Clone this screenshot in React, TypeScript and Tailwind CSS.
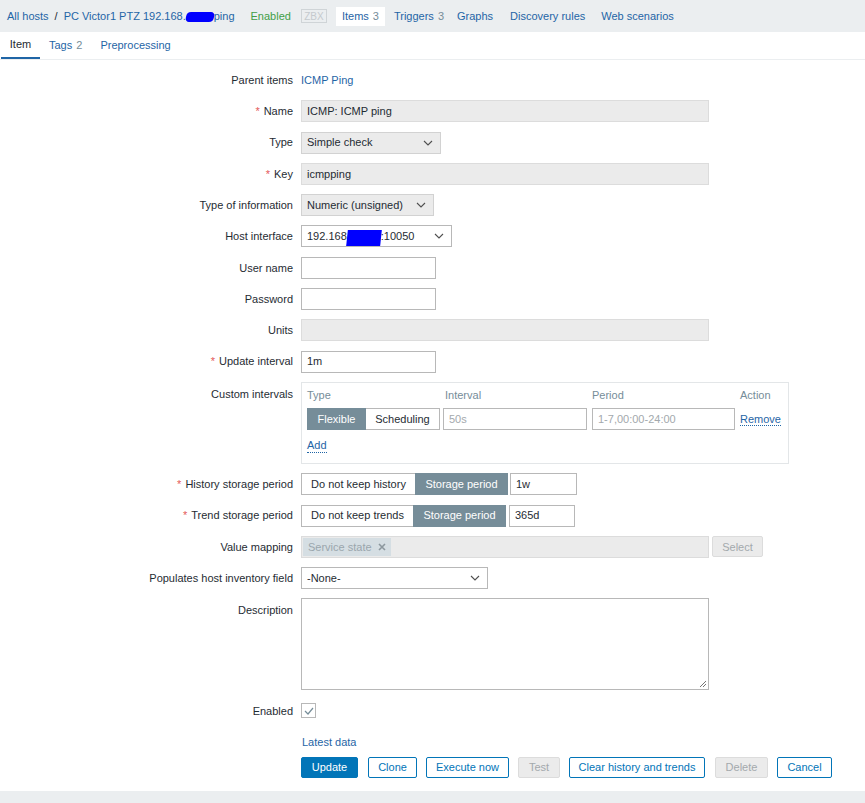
import React from 'react';

const LINK = 'text-[#1f65a6]';

function Chevron() {
  return (
    <svg width="10" height="6" viewBox="0 0 10 6" className="shrink-0">
      <path d="M1 1l4 4 4-4" fill="none" stroke="#4f4f4f" strokeWidth="1.1" />
    </svg>
  );
}

function Label({ text, required, top }: { text: string; required?: boolean; top?: boolean }) {
  return (
    <div className={`flex justify-end text-[#1f2c33] ${top ? 'items-start pt-[4px]' : 'items-center h-[22px]'}`}>
      {required && <span className="text-[#e45959] mr-[4px]">*</span>}
      {text}
    </div>
  );
}

function TextBox({ w, value, disabled, muted }: { w: string; value?: string; disabled?: boolean; muted?: boolean }) {
  return (
    <div
      className={`${w} h-[22px] flex items-center px-[5px] border ${
        disabled ? 'bg-[#ebebeb] border-[#dcdcdc]' : 'bg-white border-[#b8b8b8]'
      } ${muted ? 'text-[#a3a9ad]' : 'text-[#1f2c33]'}`}
    >
      {value}
    </div>
  );
}

function SelectBox({ w, children, gray }: { w: string; children: React.ReactNode; gray?: boolean }) {
  return (
    <div
      className={`${w} h-[22px] flex items-center justify-between pl-[5px] pr-[7px] border text-[#1f2c33] ${
        gray ? 'bg-[#ebebeb] border-[#d2d2d2]' : 'bg-white border-[#b8b8b8]'
      }`}
    >
      <span className="flex items-center">{children}</span>
      <Chevron />
    </div>
  );
}

function Toggle({ left, right, lw, rw }: { left: string; right: string; lw: string; rw: string }) {
  return (
    <div className="flex h-[22px]">
      <div className={`${lw} flex items-center justify-center border border-r-0 border-[#b8b8b8] bg-white text-[#1f2c33]`}>{left}</div>
      <div className={`${rw} flex items-center justify-center bg-[#768d99] text-white`}>{right}</div>
    </div>
  );
}

function Btn({ children, w, kind }: { children: React.ReactNode; w: string; kind: 'primary' | 'outline' | 'disabled' }) {
  const cls =
    kind === 'primary'
      ? 'bg-[#0275b8] border-[#0275b8] text-white'
      : kind === 'outline'
      ? 'bg-white border-[#0275b8] text-[#0275b8]'
      : 'bg-[#ebebeb] border-[#dcdcdc] text-[#a3a9ad]';
  return <div className={`${w} h-[21px] flex items-center justify-center border rounded-[2px] ${cls}`}>{children}</div>;
}

export default function App() {
  return (
    <div className="min-h-[803px] bg-[#ebeef0] text-[11px] text-[#1f2c33]" style={{ fontFamily: '"Liberation Sans", Arial, sans-serif' }}>
      {/* breadcrumbs */}
      <div className="h-[32px] flex items-center pl-[7px]">
        <span className={LINK}>All hosts</span>
        <span className="mx-[6px] text-[#1f2c33]">/</span>
        <span className={`${LINK} flex items-center`}>
          PC Victor1 PTZ 192.168.
          <span className="inline-block w-[28px] h-[10px] bg-[#0000ff] rounded-[4px] -skew-x-12 mt-[1px]" />
          ping
        </span>
        <span className="ml-[16px] text-[#429e47]">Enabled</span>
        <span className="ml-[10px] h-[14px] w-[26px] border border-[#cfd4d7] text-[#c5cace] text-[10px] flex items-center justify-center">ZBX</span>
        <span className="ml-[9px] h-[19px] px-[6px] bg-white flex items-center text-[#1f65a6]">
          Items<span className="ml-[4px] text-[#768d99]">3</span>
        </span>
        <span className={`ml-[9px] ${LINK}`}>
          Triggers<span className="ml-[4px] text-[#768d99]">3</span>
        </span>
        <span className={`ml-[13px] ${LINK}`}>Graphs</span>
        <span className={`ml-[17px] ${LINK}`}>Discovery rules</span>
        <span className={`ml-[16px] ${LINK}`}>Web scenarios</span>
      </div>

      <div className="bg-white pb-[13px]">
        {/* tabs */}
        <div className="h-[28px] flex items-stretch border-b border-[#ebeef0]">
          <div className="ml-[1px] w-[39px] flex items-center justify-center border-b-[2px] border-[#1f65a6] text-[#1f2c33]">Item</div>
          <div className={`ml-[9px] flex items-center ${LINK}`}>
            Tags<span className="ml-[4px] text-[#768d99]">2</span>
          </div>
          <div className={`ml-[18px] flex items-center ${LINK}`}>Preprocessing</div>
        </div>

        {/* form */}
        <div className="pt-[9px] grid grid-cols-[293px_1fr] gap-x-[8px] gap-y-[9.3px]">
          <Label text="Parent items" />
          <div className={`h-[22px] flex items-center ${LINK}`}>ICMP Ping</div>

          <Label text="Name" required />
          <TextBox w="w-[408px]" value="ICMP: ICMP ping" disabled />

          <Label text="Type" />
          <SelectBox w="w-[140px]" gray>Simple check</SelectBox>

          <Label text="Key" required />
          <TextBox w="w-[408px]" value="icmpping" disabled />

          <Label text="Type of information" />
          <SelectBox w="w-[133px]" gray>Numeric (unsigned)</SelectBox>

          <Label text="Host interface" />
          <SelectBox w="w-[151px]">
            192.168
            <span className="inline-block w-[34px] h-[16px] bg-[#0000ff] -skew-x-6 mt-[3px]" />
            :10050
          </SelectBox>

          <Label text="User name" />
          <TextBox w="w-[135px]" />

          <Label text="Password" />
          <TextBox w="w-[135px]" />

          <Label text="Units" />
          <TextBox w="w-[408px]" disabled />

          <Label text="Update interval" required />
          <TextBox w="w-[135px]" value="1m" />

          <Label text="Custom intervals" top />
          <div className="w-[488px] border border-[#e3e6e8] pt-[3px] pb-[9px] px-[5px]">
            <div className="grid grid-cols-[133px_144px_143px_1fr] gap-x-[4px] text-[#768d99]">
              <div className="h-[18px] flex items-center">Type</div>
              <div className="h-[18px] flex items-center pl-[1px]">Interval</div>
              <div className="h-[18px] flex items-center">Period</div>
              <div className="h-[18px] flex items-center pl-[1px]">Action</div>
            </div>
            <div className="mt-[4px] grid grid-cols-[133px_144px_143px_1fr] gap-x-[4px] items-center">
              <div className="flex h-[22px]">
                <div className="w-[59px] flex items-center justify-center bg-[#768d99] text-white">Flexible</div>
                <div className="w-[74px] flex items-center justify-center border border-l-0 border-[#b8b8b8] text-[#1f2c33]">Scheduling</div>
              </div>
              <div className="-ml-[1px]">
                <TextBox w="w-[144px]" value="50s" muted />
              </div>
              <TextBox w="w-[143px]" value="1-7,00:00-24:00" muted />
              <div className="pl-[1px]">
                <span className={`${LINK} border-b border-dotted border-[#1f65a6]`}>Remove</span>
              </div>
            </div>
            <div className="mt-[8px] h-[16px] flex items-center">
              <span className={`${LINK} border-b border-dotted border-[#1f65a6] leading-[13px]`}>Add</span>
            </div>
          </div>

          <Label text="History storage period" required />
          <div className="flex items-center gap-[2px]">
            <Toggle left="Do not keep history" right="Storage period" lw="w-[114px]" rw="w-[93px]" />
            <TextBox w="w-[67px]" value="1w" />
          </div>

          <Label text="Trend storage period" required />
          <div className="flex items-center gap-[3px]">
            <Toggle left="Do not keep trends" right="Storage period" lw="w-[112px]" rw="w-[93px]" />
            <TextBox w="w-[66px]" value="365d" />
          </div>

          <Label text="Value mapping" />
          <div className="flex items-center gap-[3px]">
            <div className="w-[408px] h-[22px] bg-[#ebebeb] border border-[#dcdcdc] flex items-center px-[1px]">
              <span className="h-[18px] px-[5px] bg-[#d5dee3] text-[#9aa6ad] flex items-center gap-[6px]">
                Service state
                <svg width="8" height="8" viewBox="0 0 8 8">
                  <path d="M1 1l6 6M7 1L1 7" stroke="#8c979e" strokeWidth="1.6" />
                </svg>
              </span>
            </div>
            <Btn w="w-[51px]" kind="disabled">Select</Btn>
          </div>

          <Label text="Populates host inventory field" />
          <SelectBox w="w-[187px]">-None-</SelectBox>

          <Label text="Description" top />
          <div className="relative w-[408px] h-[92px] border border-[#b8b8b8]">
            <svg width="8" height="8" viewBox="0 0 8 8" className="absolute right-[1px] bottom-[1px]">
              <path d="M7 1L1 7M7 4L4 7" stroke="#666" strokeWidth="0.9" />
            </svg>
          </div>

          <Label text="Enabled" />
          <div className="h-[22px] flex items-center">
            <div className="w-[15px] h-[15px] border border-[#b8b8b8] flex items-center justify-center">
              <svg width="10" height="8" viewBox="0 0 10 8">
                <path d="M1 4l3 3 5-6" fill="none" stroke="#768d99" strokeWidth="1.2" />
              </svg>
            </div>
          </div>

          <div />
          <div>
            <div className={`h-[22px] flex items-center pl-[1px] ${LINK}`}>Latest data</div>
            <div className="mt-[4px] flex items-center">
              <Btn w="w-[57px]" kind="primary">Update</Btn>
              <div className="ml-[10px]"><Btn w="w-[49px]" kind="outline">Clone</Btn></div>
              <div className="ml-[9px]"><Btn w="w-[83px]" kind="outline">Execute now</Btn></div>
              <div className="ml-[9px]"><Btn w="w-[42px]" kind="disabled">Test</Btn></div>
              <div className="ml-[9px]"><Btn w="w-[136px]" kind="outline">Clear history and trends</Btn></div>
              <div className="ml-[10px]"><Btn w="w-[53px]" kind="disabled">Delete</Btn></div>
              <div className="ml-[9px]"><Btn w="w-[55px]" kind="outline">Cancel</Btn></div>
            </div>
          </div>
        </div>
      </div>
    </div>
  );
}
